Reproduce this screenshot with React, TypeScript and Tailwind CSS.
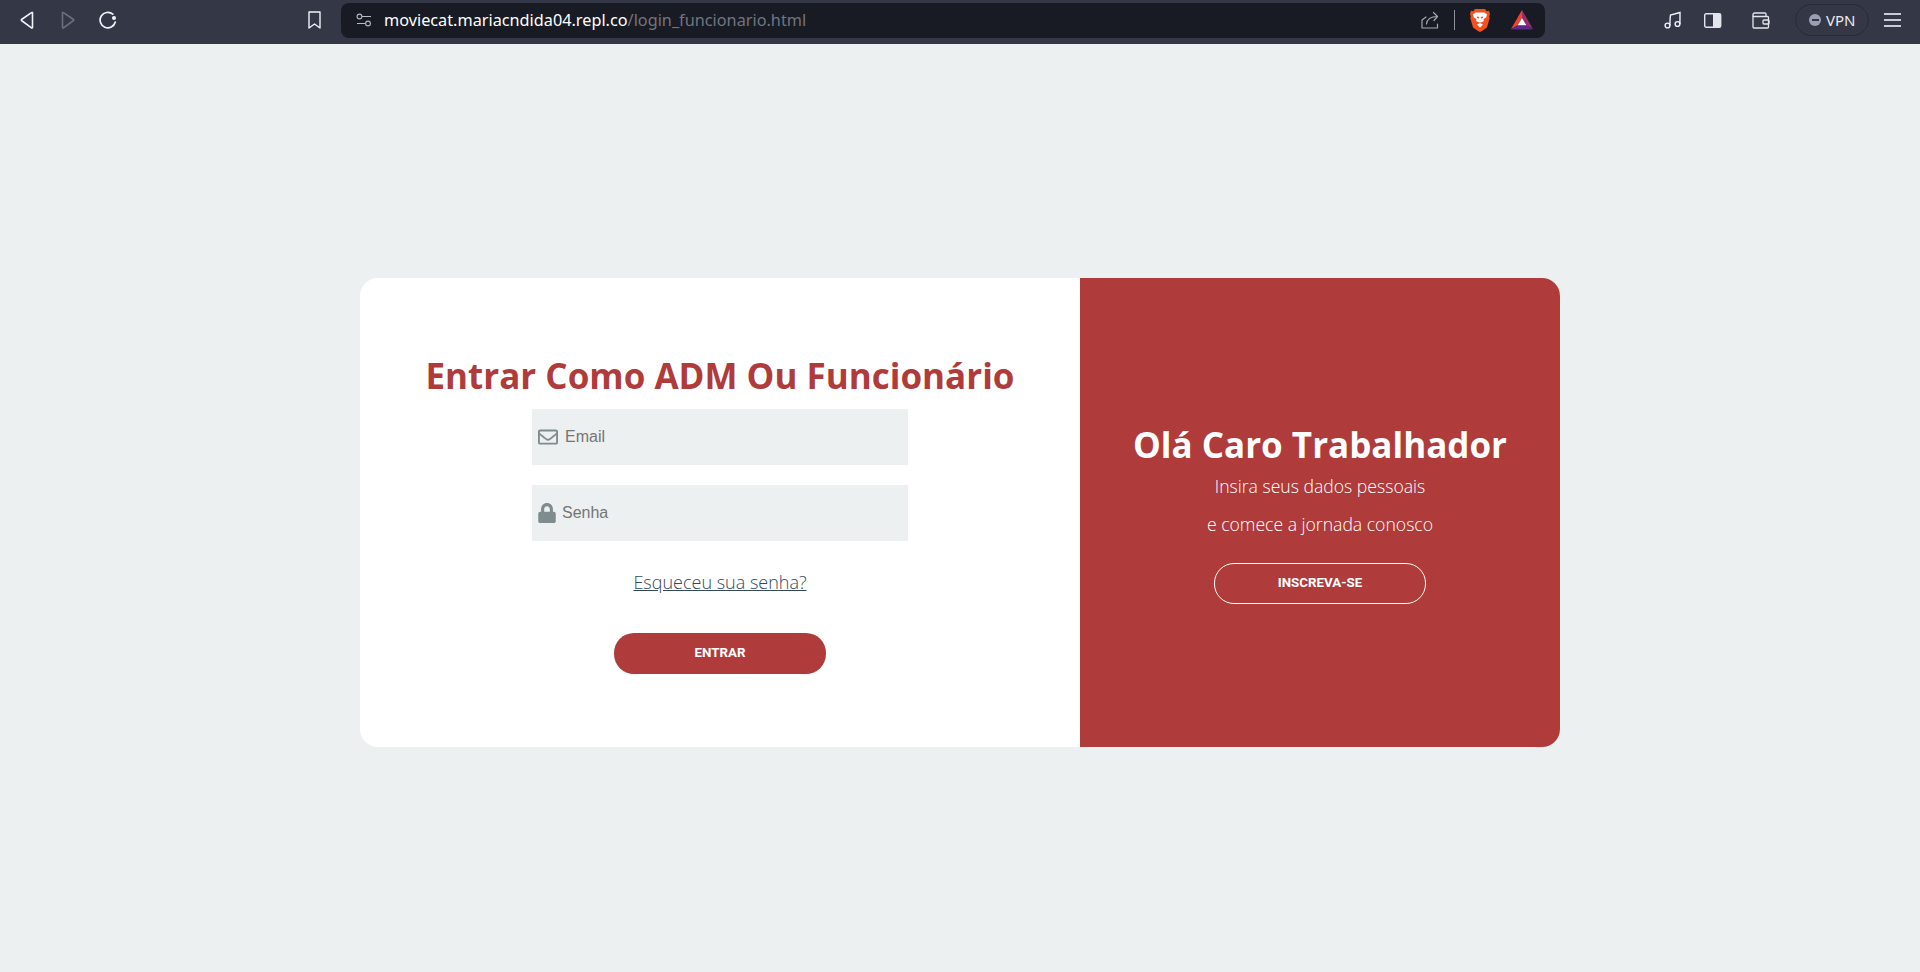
import React from "react";
import {FaLock, FaRegEnvelope} from "react-icons/fa";

const BrowserBar = () => {
    return (
        <div className="h-11 pb-[4px] bg-[#343746] flex items-center shrink-0 text-white font-['Noto_Sans',sans-serif]">
            <svg className="ml-[20px]" width="14" height="18" viewBox="0 0 14 18" fill="none" stroke="#f1f3f9" strokeWidth="1.6" strokeLinejoin="round">
                <path d="M12.5 1.5v15a.6.6 0 0 1-1 .4L1.5 9.5a.7.7 0 0 1 0-1l10-6.9a.6.6 0 0 1 1 .4z"/>
            </svg>
            <svg className="ml-[27px]" width="14" height="18" viewBox="0 0 14 18" fill="none" stroke="#6b6f80" strokeWidth="1.6" strokeLinejoin="round">
                <path d="M1.5 1.5v15a.6.6 0 0 0 1 .4l10-7.4a.7.7 0 0 0 0-1l-10-6.9a.6.6 0 0 0-1 .4z"/>
            </svg>
            <svg className="ml-[24px]" width="18" height="18" viewBox="0 0 18 18" fill="none" stroke="#f1f3f9" strokeWidth="1.7" strokeLinecap="round">
                <path d="M13.800 3.200A7.700 7.700 0 1 0 16.300 11"/>
                <circle cx="15" cy="7" r="2" fill="#f1f3f9" stroke="none"/>
            </svg>
            <svg className="ml-[191px]" width="13" height="18" viewBox="0 0 13 18" fill="none" stroke="#f1f3f9" strokeWidth="1.4" strokeLinejoin="round">
                <path d="M1 1h11v16l-5.500-4L1 17z"/>
            </svg>
            <div className="ml-[20px] w-[1204px] h-[35px] bg-[#181b23] rounded-lg flex items-center">
                <svg className="ml-[15px]" width="16" height="15" viewBox="0 0 16 15" fill="none" stroke="#b6b9c6" strokeWidth="1.1">
                    <circle cx="3.500" cy="3.500" r="2.400"/>
                    <path d="M6 3.500h9M1 10.500h8"/>
                    <circle cx="12" cy="10.500" r="2.400"/>
                </svg>
                <div className="ml-[12px] text-[16.25px] leading-none text-white whitespace-nowrap">
                    moviecat.mariacndida04.repl.co<span className="text-[#72757f]">/login_funcionario.html</span>
                </div>
                <div className="ml-auto flex items-center">
                    <svg width="18" height="18" viewBox="0 0 18 18" fill="none" stroke="#a5a8b3" strokeWidth="1.200" strokeLinejoin="round" strokeLinecap="round">
                        <path d="M5 6L1 9v8h15.500v-4"/>
                        <path d="M5.500 13C6 8.500 9.500 5.500 16.500 5.500"/>
                        <path d="M12.500 1.500l4 4-3.500 4"/>
                    </svg>
                    <div className="ml-[15px] w-px h-[20px] bg-[#8c8f9a]"/>
                    <svg className="ml-[15px]" width="20" height="23" viewBox="0 0 20 23">
                        <path d="M5 0h10l1.800 2.200 2.200-.4 1 3.200-.8 2.500.5 1.500-2.700 9.500-5 3.500-2 1-2-1-5-3.500L.300 9l.5-1.500L0 5l1-3.200 2.200.4z" fill="#f4511e"/>
                        <path d="M5.500 3.500h9l2.500 2-.8 3-2.700 1.500.5 2-3 1.500H9l-3-1.500.5-2L3.800 8.500 3 5.500z" fill="#ffffff"/>
                        <path d="M7 7.500l2.300.5-.3 1.500-2-.5zM13 7.500l-2.300.5.300 1.500 2-.5z" fill="#f4511e"/>
                        <path d="M7 15.500l3-1.500 3 1.500-3 3z" fill="#ffffff"/>
                    </svg>
                    <svg className="ml-[21px] mr-[12px]" width="22" height="20" viewBox="0 0 22 20">
                        <path d="M11 0L0 19l6.500-3.500L11 8z" fill="#f0452b"/>
                        <path d="M11 0l11 19-6.500-3.500L11 8z" fill="#9b2a6b"/>
                        <path d="M11 8l4.500 7.500h-9z" fill="#ffffff"/>
                        <path d="M0 19.500l6.500-4h9l6.500 4z" fill="#5f2a8f"/>
                    </svg>
                </div>
            </div>
            <svg className="ml-[119px]" width="18" height="18" viewBox="0 0 18 18" fill="none" stroke="#f1f3f9" strokeWidth="1.400">
                <circle cx="3.500" cy="14.500" r="2.400"/>
                <circle cx="13.500" cy="13" r="2.400"/>
                <path d="M5.900 14.500C6 10 6 7 6.500 4 L16 1.500 C16 6 16 9 15.900 13"/>
            </svg>
            <svg className="ml-[22px]" width="18" height="15" viewBox="0 0 18 15">
                <rect x="0.700" y="0.700" width="16" height="13.600" rx="1.500" fill="none" stroke="#e4e5ec" strokeWidth="1.400"/>
                <path d="M9 .7h6.200a1.500 1.500 0 0 1 1.500 1.500v10.600a1.500 1.500 0 0 1-1.500 1.500H9z" fill="#e4e5ec"/>
            </svg>
            <svg className="ml-[30px]" width="18" height="17" viewBox="0 0 18 17" fill="none" stroke="#e4e5ec" strokeWidth="1.300">
                <path d="M1 4.500h14.500a1 1 0 0 1 1 1V15a1 1 0 0 1-1 1H2a1 1 0 0 1-1-1z"/>
                <path d="M1 4.500V2.500a1.500 1.500 0 0 1 1.500-1.500H13a1 1 0 0 1 1 1v2.500"/>
                <rect x="11" y="8" width="6" height="4" rx="1"/>
            </svg>
            <div className="ml-[25px] w-[74px] h-8 rounded-full border border-[#282b38] flex items-center">
                <div className="ml-[13px] w-3 h-3 rounded-full bg-[#9c9fb2] flex items-center justify-center">
                    <div className="w-[7px] h-[2px] bg-[#343746]"/>
                </div>
                <span className="ml-[5px] text-[15px] leading-none text-[#e8eaf2]">VPN</span>
            </div>
            <div className="ml-[15px] w-[17px] flex flex-col gap-[4.500px]">
                <div className="h-[1.500px] bg-[#c9cbd6]"/>
                <div className="h-[1.500px] bg-[#c9cbd6]"/>
                <div className="h-[1.500px] bg-[#c9cbd6]"/>
            </div>
        </div>
    )
}

const App = () => {
    return (
        <div className="min-h-screen bg-[#ecf0f1] flex flex-col font-['Open_Sans',sans-serif]">
            <BrowserBar/>
            <div className="mt-[234px] mx-auto w-[1200px] h-[469px] flex rounded-[18px] overflow-hidden">
                <div className="w-[720px] bg-white flex flex-col items-center pt-[70px]">
                    <h1 className="text-[35px] leading-[56px] font-bold text-[#af3b3b] whitespace-nowrap">Entrar Como ADM Ou Funcionário</h1>
                    <label className="mt-[5px] w-[376px] h-14 bg-[#ecf0f1] flex items-center pl-[6px] gap-[7px] text-[#7f8c8d]">
                        <FaRegEnvelope size={20}/>
                        <input className="flex-1 bg-transparent outline-none text-base placeholder:text-[#757575] font-['Liberation_Sans',sans-serif]" placeholder="Email"/>
                    </label>
                    <label className="mt-5 w-[376px] h-14 bg-[#ecf0f1] flex items-center pl-[5px] gap-[5px] text-[#7f8c8d]">
                        <FaLock size={20}/>
                        <input className="flex-1 bg-transparent outline-none text-base placeholder:text-[#757575] font-['Liberation_Sans',sans-serif]" placeholder="Senha"/>
                    </label>
                    <a href="#" className="mt-[27px] text-[18px] leading-[28px] font-light text-[#34495e] underline">Esqueceu sua senha?</a>
                    <button className="mt-[37px] w-[212px] h-[41px] pb-[2px] rounded-[20px] bg-[#af3b3b] text-white text-[13.33px] font-bold font-['Roboto',sans-serif]">ENTRAR</button>
                </div>
                <div className="w-[480px] bg-[#af3b3b] flex flex-col items-center pt-[143px] text-white">
                    <h2 className="text-[35px] leading-[48px] font-bold whitespace-nowrap">Olá Caro Trabalhador</h2>
                    <p className="text-[17.6px] leading-[38px] font-light mt-[-2px]">Insira seus dados pessoais</p>
                    <p className="text-[17.6px] leading-[38px] font-light">e comece a jornada conosco</p>
                    <button className="mt-5 w-[212px] h-[41px] pb-[1px] rounded-[20px] border border-white text-white text-[13.33px] font-bold font-['Roboto',sans-serif]">INSCREVA-SE</button>
                </div>
            </div>
        </div>
    );
};

export default App;
